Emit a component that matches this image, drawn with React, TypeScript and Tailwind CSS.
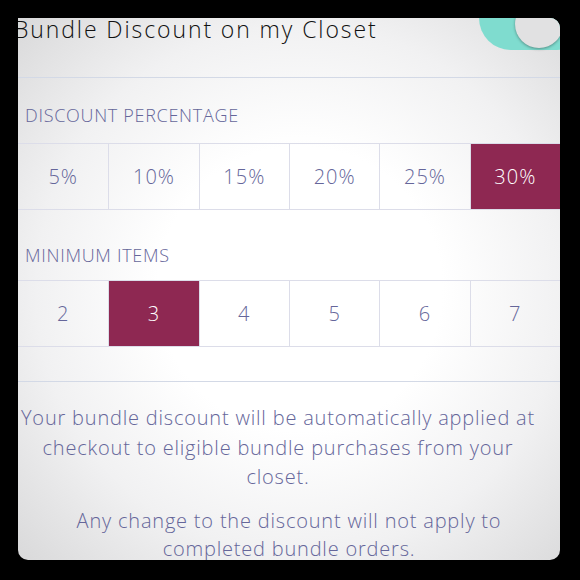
const percents = ["5%", "10%", "15%", "20%", "25%", "30%"];
const items = ["2", "3", "4", "5", "6", "7"];

function Options({ values, selected }: { values: string[]; selected: string }) {
  return (
    <div className="grid h-[67px] grid-cols-6 border-y border-[#dcdde9]">
      {values.map((v, i) => {
        const active = v === selected;
        return (
          <div
            key={v}
            className={`flex items-center justify-center text-[20px] font-[350] tracking-[1px] ${
              i > 0 ? "border-l border-[#dcdde9]" : ""
            } ${active ? "bg-[#8e2852] text-white" : "text-[#65669a]"}`}
          >
            {v}
          </div>
        );
      })}
    </div>
  );
}

export default function App() {
  return (
    <div className="h-[580px] w-[580px] bg-black p-[18px] pr-[20px] pb-[20px]">
      <div
        className="relative h-[542px] w-[542px] overflow-hidden rounded-[10px] rounded-tl-none bg-[radial-gradient(ellipse_75%_75%_at_52%_50%,#ffffff_35%,#f1f1f2_65%,#d6d6d7_100%)]"
        style={{ fontFamily: "'Open Sans', Lato, sans-serif" }}
      >
        {/* header */}
        <div className="relative h-[62px] border-b border-[#d3d9e6]">
          <h1 className="-ml-[4px] -mt-[2px] whitespace-nowrap text-[23px] font-[350] leading-[26px] tracking-[1.9px] text-[#111111]">
            Bundle Discount on my Closet
          </h1>
          <div className="absolute -top-[30px] left-[461px] h-[64px] w-[110px] rounded-full bg-[#7fdccf]">
            <div className="absolute left-[36px] top-[14px] h-[48px] w-[48px] rounded-full bg-[#e1e1e2] shadow-[0_1px_3px_rgba(0,0,0,0.35)]" />
          </div>
        </div>

        <p className="ml-[7px] mt-[26px] text-[18px] font-[350] leading-[22px] tracking-[0.7px] text-[#65669a]">
          DISCOUNT PERCENTAGE
        </p>
        <div className="mt-[17px]">
          <Options values={percents} selected="30%" />
        </div>

        <p className="ml-[7px] mt-[34px] text-[18px] font-[350] leading-[22px] tracking-[0.7px] text-[#65669a]">
          MINIMUM ITEMS
        </p>
        <div className="mt-[14px]">
          <Options values={items} selected="3" />
        </div>

        <div className="mt-[34px] border-t border-[#d3d9e6]" />

        <div className="text-[20px] font-[350] tracking-[0.8px] text-[#65669a]">
          <p className="mt-[21px] pr-[22px] text-center leading-[29.5px]">
            Your bundle discount will be automatically applied at checkout to eligible bundle
            purchases from your closet.
          </p>
          <p className="mt-[15px] px-[40px] text-center leading-[28px]">
            Any change to the discount will not apply to completed bundle orders.
          </p>
        </div>
      </div>
    </div>
  );
}
